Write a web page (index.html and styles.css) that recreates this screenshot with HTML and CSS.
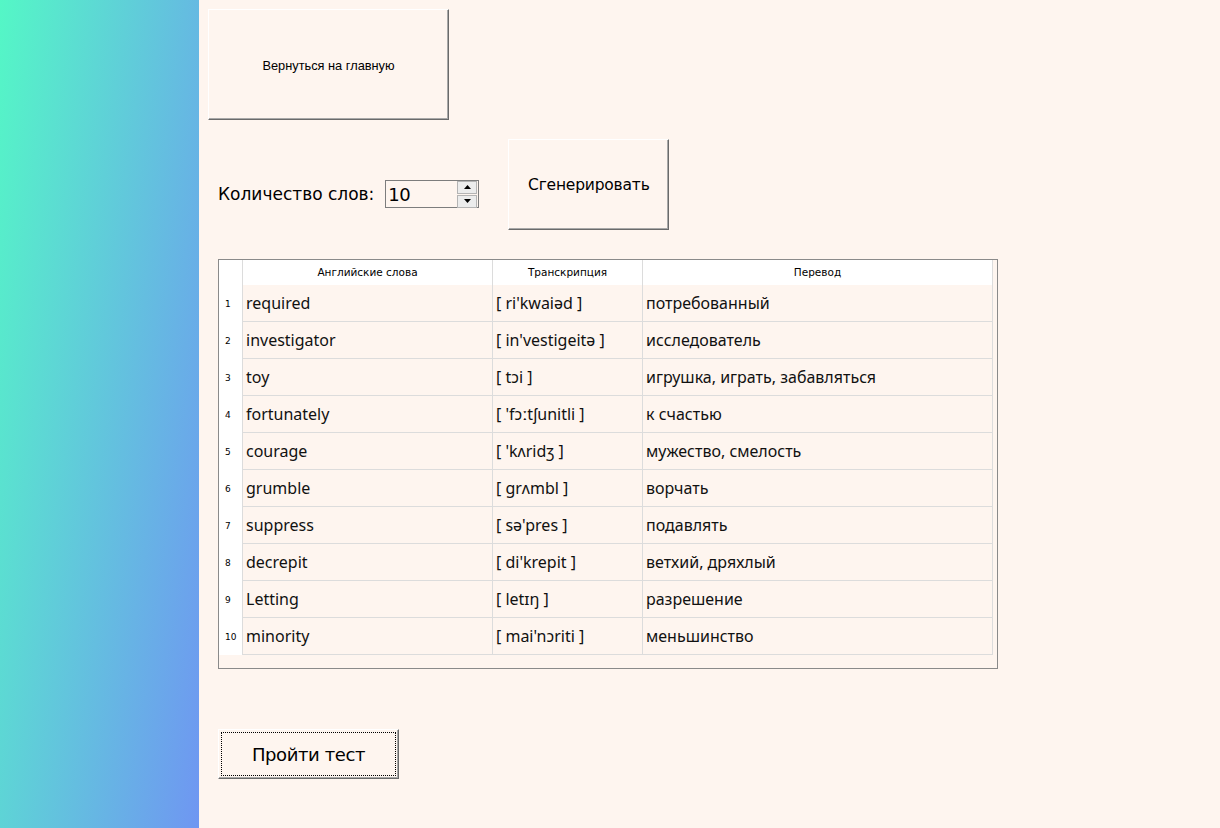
FILE: index.html
```html
<!DOCTYPE html>
<html lang="ru">
<head>
<meta charset="utf-8">
<title>Слова</title>
<link rel="stylesheet" href="styles.css">
</head>
<body>
<div class="app">
  <aside class="sidebar"></aside>
  <main class="main">
    <button class="btn btn-home">Вернуться на главную</button>
    <div class="gen-row">
      <div class="count">
        <span class="count-label">Количество слов:</span>
        <div class="spin">
          <span class="spin-value">10</span>
          <div class="spin-btns">
            <span class="spin-btn"><svg width="7" height="4" viewBox="0 0 7 4"><path d="M0 4 L3.5 0 L7 4 Z" fill="#000"/></svg></span>
            <span class="spin-btn"><svg width="7" height="4" viewBox="0 0 7 4"><path d="M0 0 L3.5 4 L7 0 Z" fill="#000"/></svg></span>
          </div>
        </div>
      </div>
      <button class="btn btn-gen">Сгенерировать</button>
    </div>
    <div class="table-box">
      <div class="grid">
        <div class="h num"></div>
        <div class="h">Английские слова</div>
        <div class="h">Транскрипция</div>
        <div class="h">Перевод</div>

        <div class="num">1</div><div class="c">required</div><div class="c">[ ri'kwaiəd ]</div><div class="c">потребованный</div>
        <div class="num">2</div><div class="c">investigator</div><div class="c">[ in'vestigeitə ]</div><div class="c">исследователь</div>
        <div class="num">3</div><div class="c">toy</div><div class="c">[ tɔi ]</div><div class="c">игрушка, играть, забавляться</div>
        <div class="num">4</div><div class="c">fortunately</div><div class="c">[ 'fɔːtʃunitli ]</div><div class="c">к счастью</div>
        <div class="num">5</div><div class="c">courage</div><div class="c">[ 'kʌridʒ ]</div><div class="c">мужество, смелость</div>
        <div class="num">6</div><div class="c">grumble</div><div class="c">[ grʌmbl ]</div><div class="c">ворчать</div>
        <div class="num">7</div><div class="c">suppress</div><div class="c">[ sə'pres ]</div><div class="c">подавлять</div>
        <div class="num">8</div><div class="c">decrepit</div><div class="c">[ di'krepit ]</div><div class="c">ветхий, дряхлый</div>
        <div class="num">9</div><div class="c">Letting</div><div class="c">[ letɪŋ ]</div><div class="c">разрешение</div>
        <div class="num">10</div><div class="c">minority</div><div class="c">[ mai'nɔriti ]</div><div class="c">меньшинство</div>
      </div>
    </div>
    <button class="btn btn-test"><span class="focus">Пройти тест</span></button>
  </main>
</div>
</body>
</html>
```

FILE: styles.css
```css
html, body {
  margin: 0;
  padding: 0;
  height: 100%;
}
body {
  background: #fef5ef;
  font-family: "Liberation Sans", Arial, sans-serif;
  color: #000;
}
.app {
  display: flex;
  height: 828px;
  overflow: hidden;
}
.sidebar {
  width: 199px;
  flex: 0 0 199px;
  background: linear-gradient(98deg, #54f7c6 0%, #6f96f2 100%);
}
.main {
  flex: 1;
  background: #fef5ef;
  display: flex;
  flex-direction: column;
  align-items: flex-start;
  padding: 9px 0 0 9px;
}
.btn {
  background: #fef5ef;
  border: 1px solid;
  border-color: #ffffff #6a6a6a #6a6a6a #ffffff;
  box-shadow: inset -1px -1px 0 #a8a8a8;
  font-family: "Liberation Sans", Arial, sans-serif;
  color: #000;
  padding: 0;
  display: flex;
  align-items: center;
  justify-content: center;
}
.btn-home {
  width: 241px;
  height: 111px;
  font-size: 12.8px;
  padding-top: 2px;
}
.gen-row {
  display: flex;
  align-items: flex-start;
  margin: 19px 0 0 10px;
}
.count {
  display: flex;
  align-items: center;
  margin-top: 41px;
}
.count-label {
  font-family: "DejaVu Sans", sans-serif;
  font-size: 17px;
  letter-spacing: 0;
  margin-right: 11px;
}
.spin {
  width: 92px;
  height: 26px;
  border: 1px solid #7d7d7d;
  display: flex;
  align-items: center;
  justify-content: space-between;
  background: #fef5ef;
}
.spin-value {
  font-family: "DejaVu Sans", sans-serif;
  font-size: 18px;
  padding-left: 2px;
  letter-spacing: -0.5px;
}
.spin-btns {
  display: flex;
  flex-direction: column;
  gap: 1px;
  margin-right: 1px;
}
.spin-btn {
  width: 18px;
  height: 11px;
  background: #ececec;
  border: 1px solid #b4b4b4;
  display: flex;
  align-items: center;
  justify-content: center;
}
.btn-gen {
  width: 161px;
  height: 91px;
  margin-left: 29px;
  font-family: "DejaVu Sans", sans-serif;
  font-size: 15.5px;
  letter-spacing: -0.2px;
  padding-bottom: 0;
}
.table-box {
  margin: 29px 0 0 10px;
  width: 778px;
  height: 408px;
  border: 1px solid #8a8a8a;
  background: #fef5ef;
}
.grid {
  display: grid;
  grid-template-columns: 24px 250px 150px 350px;
  grid-auto-rows: 37px;
  grid-template-rows: 25px;
  background: #fff;
  width: 774px;
}
.grid > div {
  border-right: 1px solid #dcdcdc;
  box-sizing: border-box;
}
.h {
  background: #fff;
  font-family: "DejaVu Sans", sans-serif;
  font-size: 10.5px;
  display: flex;
  align-items: center;
  justify-content: center;
  padding-bottom: 1px;
}
.num {
  background: #fff;
  font-family: "DejaVu Sans", sans-serif;
  font-size: 9px;
  padding-left: 6px;
  display: flex;
  align-items: center;
}
.c {
  background: #fef5ef;
  border-bottom: 1px solid #dcdcdc;
  font-family: "Noto Sans", "Open Sans", sans-serif;
  font-size: 16px;
  color: #111;
  padding-left: 3px;
  display: flex;
  align-items: center;
  padding-bottom: 1px;
  white-space: nowrap;
}
.btn-test {
  width: 181px;
  height: 50px;
  margin: 60px 0 0 10px;
  padding: 2px;
  font-family: "DejaVu Sans", sans-serif;
  font-size: 18px;
  letter-spacing: -0.4px;
}
.focus {
  flex: 1;
  align-self: stretch;
  border: 1px dotted #000;
  display: flex;
  align-items: center;
  justify-content: center;
}
```
